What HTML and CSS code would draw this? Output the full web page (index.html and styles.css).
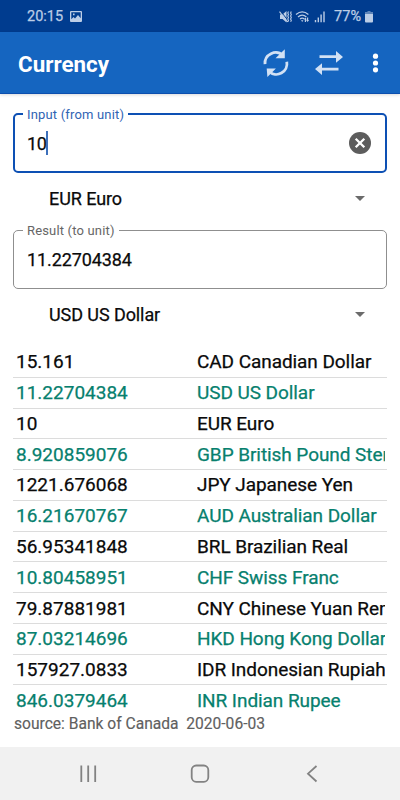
FILE: index.html
```html
<!DOCTYPE html>
<html lang="en">
<head>
<meta charset="utf-8">
<title>Currency</title>
<link rel="stylesheet" href="styles.css">
</head>
<body>
<div class="status">
  <span class="time">20:15</span>
  <svg class="photo" width="12" height="12" viewBox="0 0 12 12"><path fill="currentColor" fill-rule="evenodd" d="M1 0h10a1 1 0 0 1 1 1v9a1 1 0 0 1-1 1H1a1 1 0 0 1-1-1V1a1 1 0 0 1 1-1zM1.300 1.300v7L3.500 6l1.500 1.600L8 4l2.700 3.200V1.300zM3 2.600h1.600v1.600H3z"/></svg>
  <span class="grow"></span>
  <svg width="48" height="14" viewBox="0 0 48 14" fill="none" stroke="currentColor">
    <path fill="currentColor" stroke="none" d="M1 4.500h2.500L7.500 1v11.500L3.500 9H1z"/>
    <path stroke="#003c8f" stroke-width="1" d="M1.500 1l7.500 9.500"/>
    <path stroke-width="1.100" d="M.5 1.700l8 10.300M9.500 1.500l-.7 1.500.7 1.500-.7 1.500.7 1.500-.7 1.500.7 1.500-.7 1.200M12.300 1.500l-.7 1.500.7 1.500-.7 1.500.7 1.500-.7 1.500.7 1.500-.7 1.200"/>
    <path stroke-width="1.300" d="M17 4.600q6.200-5.300 12.400 0M19 6.900q4.200-3.500 8.400 0M21 9.100q2.200-1.800 4.400 0"/>
    <path fill="currentColor" stroke="none" d="M22 10.300h2.400L23.200 12zM25 9.500l1.400-2 1.400 2h-.8V12h-1.200V9.500zM28 10V7.500h1.200V10h.9l-1.500 2-1.500-2z"/>
    <path stroke-width="1.400" d="M36.500 10v2.300M39.300 7.500v4.800M42.100 4.500v7.800M45 1.500v10.800"/>
  </svg>
  <span class="pct">77%</span>
  <svg class="batt" width="8" height="12" viewBox="0 0 8 12" fill="currentColor"><path opacity=".5" d="M2.500 0h3v1H8v2H0V1h2.500z"/><path d="M0 3h8v7.500a1 1 0 0 1-1 1H1a1 1 0 0 1-1-1z"/></svg>
</div>
<header class="bar">
  <h1>Currency</h1>
  <svg width="120" height="32" viewBox="260 47 120 32">
    <g fill="none" stroke="#d2e1f4" stroke-width="2.800"><path d="M265 64.200A10.700 10.700 0 0 1 283 55.500M286.800 61.800A10.700 10.700 0 0 1 269 71.500"/></g>
    <path fill="#d2e1f4" d="M284.800 49.300v8.900h-9.300zM266.700 68.500h9.200l-8.500 8.500z"/>
    <path fill="#d2e1f4" d="M319.500 55.300H336V51l7 5.900-7 5.900v-4.700h-16.500zM338.500 70.600H322V75l-7-5.900 7-5.900v4.600h16.500z"/>
    <g fill="#fff"><circle cx="375.500" cy="56.200" r="2.600"/><circle cx="375.500" cy="63" r="2.600"/><circle cx="375.500" cy="69.800" r="2.600"/></g>
  </svg>
</header>
<main>
  <div class="field active">
    <span class="label">Input (from unit)</span>
    <span class="value">10</span><span class="caret"></span>
    <svg class="clear" width="22" height="22" viewBox="0 0 22 22"><circle cx="11" cy="11" r="11" fill="#5d5d5d"/><path d="M6.700 6.700l8.600 8.600M15.300 6.700l-8.600 8.600" stroke="#fff" stroke-width="2.300"/></svg>
  </div>
  <div class="select first"><span>EUR Euro</span><i></i></div>
  <div class="field">
    <span class="label">Result (to unit)</span>
    <span class="value">11.22704384</span>
  </div>
  <div class="select"><span>USD US Dollar</span><i></i></div>
  <div class="rates">
    <div class="row"><span>15.161</span><span>CAD Canadian Dollar</span></div>
    <div class="row"><span>11.22704384</span><span>USD US Dollar</span></div>
    <div class="row"><span>10</span><span>EUR Euro</span></div>
    <div class="row"><span>8.920859076</span><span>GBP British Pound Sterling</span></div>
    <div class="row"><span>1221.676068</span><span>JPY Japanese Yen</span></div>
    <div class="row"><span>16.21670767</span><span>AUD Australian Dollar</span></div>
    <div class="row"><span>56.95341848</span><span>BRL Brazilian Real</span></div>
    <div class="row"><span>10.80458951</span><span>CHF Swiss Franc</span></div>
    <div class="row"><span>79.87881981</span><span>CNY Chinese Yuan Renminbi</span></div>
    <div class="row"><span>87.03214696</span><span>HKD Hong Kong Dollar</span></div>
    <div class="row"><span>157927.0833</span><span>IDR Indonesian Rupiah</span></div>
    <div class="row"><span>846.0379464</span><span>INR Indian Rupee</span></div>
  </div>
  <div class="source">source: Bank of Canada&nbsp; 2020-06-03</div>
</main>
<nav>
  <svg width="400" height="53" viewBox="0 747 400 53" fill="none" stroke="#828282" stroke-width="1.800"><path d="M81.300 765.500v16.500M88.200 765.500v16.500M95.200 765.500v16.500"/><rect x="191.700" y="765.500" width="16.600" height="16.300" rx="4.500"/><path d="M316.500 766l-8.500 7.700 8.500 7.800"/></svg>
</nav>
</body>
</html>
```

FILE: styles.css
```css
* { box-sizing: border-box; }
body {
  margin: 0;
  width: 400px;
  height: 800px;
  display: flex;
  flex-direction: column;
  overflow: hidden;
  background: #fff;
  color: #0a0a0a;
  font-family: Roboto, sans-serif;
  font-size: 18px;
}
svg { display: block; flex: none; }
.status {
  height: 32px;
  flex: none;
  display: flex;
  align-items: center;
  padding: 1px 27px 0;
  background: #003c8f;
  color: #bccde6;
  font-size: 14.5px;
  -webkit-text-stroke: .25px currentColor;
}
.photo { margin-left: 7px; }
.grow { flex: 1; }
.pct { margin-left: 7px; }
.batt { margin-left: 4px; }
.bar {
  height: 62px;
  flex: none;
  display: flex;
  align-items: center;
  justify-content: space-between;
  padding: 0 20px 0 18px;
  background: #1565c0;
  border-bottom: 1px solid #0d4fae;
  box-shadow: 0 1px 3px rgba(0, 0, 0, .15);
  color: #fff;
}
h1 { margin: 2px 0 0; font-size: 22.4px; font-weight: 700; }
main { flex: 1; min-height: 0; padding: 20px 13px 0; }
.field {
  position: relative;
  height: 59px;
  display: flex;
  align-items: center;
  padding: 0 14px;
  border: 1px solid #8f8f8f;
  border-radius: 5px;
}
.field.active { border: 2px solid #0d50b4; padding: 0 14px 0 12px; height: 60px; margin-top: -1px; }
.value, .select span { -webkit-text-stroke: .25px currentColor; }
.value { margin-left: -1px; letter-spacing: -.1px; }
.active .value { margin-left: 0; letter-spacing: -.4px; }
.label {
  position: absolute;
  left: 9px;
  top: -8px;
  padding: 0 4px;
  background: #fff;
  color: #666;
  font-size: 13px;
  letter-spacing: .17px;
  line-height: 16px;
}
.active .label { left: 8px; color: #3064b4; }
.caret { width: 2px; height: 24px; background: #3d70bb; }
.clear { margin-left: auto; }
.select {
  height: 52px;
  display: flex;
  align-items: center;
  justify-content: space-between;
  padding: 0 22px 1px 36px;
  letter-spacing: -.08px;
}
.select.first { height: 57px; padding-bottom: 6px; }
.select i {
  border: 5.5px solid transparent;
  border-top-color: #6b6b6b;
  border-bottom: 0;
}
.rates { margin-top: 6px; font-size: 19px; }
.row {
  height: 30.77px;
  display: grid;
  grid-template-columns: 181px 188px;
  align-items: center;
  padding-left: 3px;
  border-bottom: 1px solid #dcdcdc;
  white-space: nowrap;
}
.row span { overflow: hidden; -webkit-text-stroke: .25px currentColor; }
.row span + span { letter-spacing: -.07px; }
.row:nth-child(even) { color: #07806e; }
.row:last-child { border-bottom: 0; }
.source { padding-left: 1px; color: #606060; font-size: 15.6px; line-height: 16px; -webkit-text-stroke: .15px currentColor; }
nav { height: 53px; flex: none; background: #f1f1f1; }
```
